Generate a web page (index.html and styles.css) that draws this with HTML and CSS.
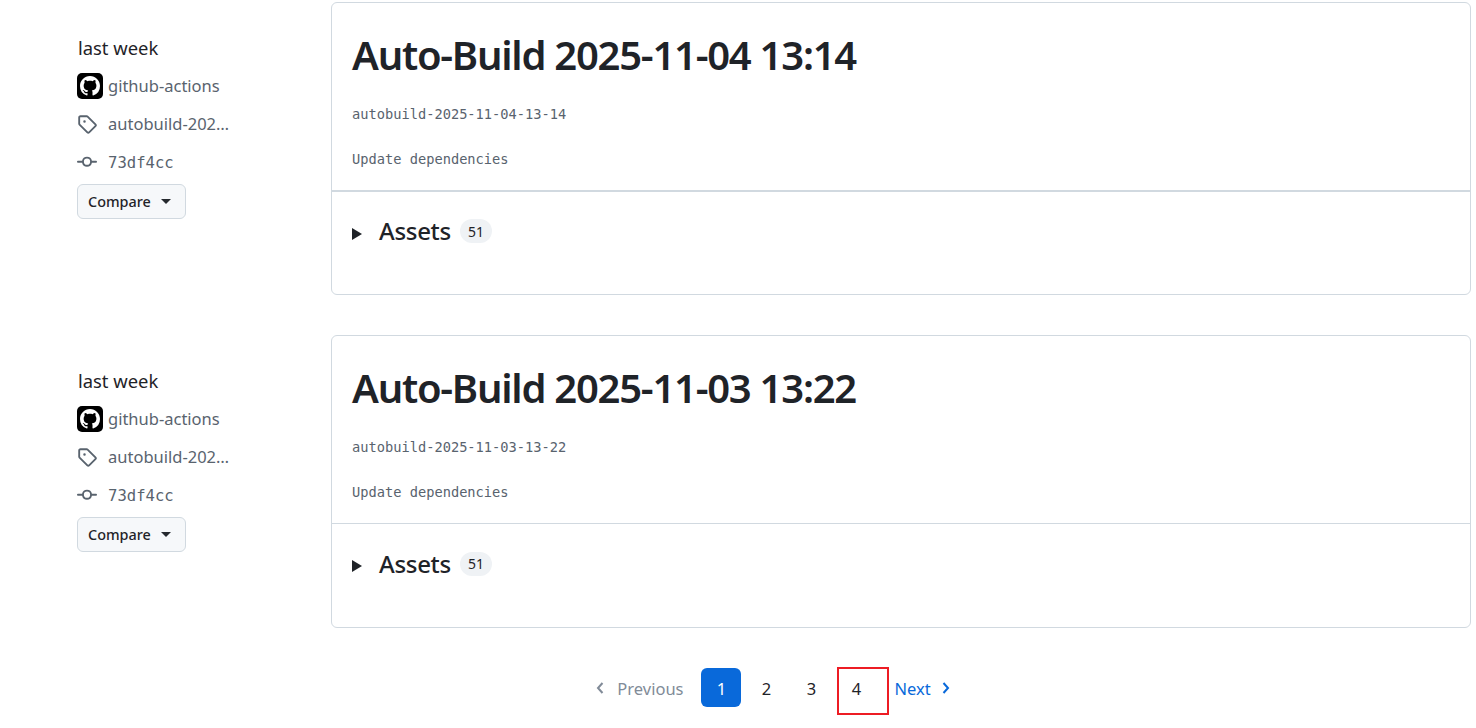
FILE: index.html
```html
<!DOCTYPE html>
<html lang="en">
<head>
<meta charset="utf-8">
<title>Releases</title>
<link rel="stylesheet" href="styles.css">
</head>
<body>
<svg class="defs" width="0" height="0" aria-hidden="true">
  <symbol id="mark" viewBox="0 0 16 16"><path fill="#fff" d="M8 0c4.42 0 8 3.58 8 8a8.013 8.013 0 0 1-5.45 7.59c-.4.08-.55-.17-.55-.38 0-.27.01-1.13.01-2.2 0-.75-.25-1.23-.54-1.48 1.78-.2 3.65-.88 3.65-3.95 0-.88-.31-1.59-.82-2.15.08-.2.36-1.02-.08-2.12 0 0-.67-.22-2.2.82-.64-.18-1.32-.27-2-.27-.68 0-1.36.09-2 .27-1.53-1.03-2.2-.82-2.2-.82-.44 1.1-.16 1.92-.08 2.12-.51.56-.82 1.28-.82 2.15 0 3.06 1.86 3.75 3.64 3.95-.23.2-.44.55-.51 1.07-.46.21-1.61.55-2.33-.66-.15-.24-.6-.83-1.23-.82-.67.01-.27.38.01.53.34.19.73.9.82 1.13.16.45.68 1.31 2.69.94 0 .67.01 1.3.01 1.49 0 .21-.15.45-.55.38A7.995 7.995 0 0 1 0 8c0-4.42 3.58-8 8-8Z"/></symbol>
  <symbol id="tag" viewBox="0 0 16 16"><path fill="currentColor" d="M1 7.775V2.75C1 1.784 1.784 1 2.75 1h5.025c.464 0 .91.184 1.238.513l6.25 6.25a1.75 1.75 0 0 1 0 2.474l-5.026 5.026a1.75 1.75 0 0 1-2.474 0l-6.25-6.25A1.752 1.752 0 0 1 1 7.775Zm1.5 0c0 .066.026.13.073.177l6.25 6.25a.25.25 0 0 0 .354 0l5.025-5.025a.25.25 0 0 0 0-.354l-6.25-6.25a.25.25 0 0 0-.177-.073H2.75a.25.25 0 0 0-.25.25ZM6 5a1 1 0 1 1 0 2 1 1 0 0 1 0-2Z"/></symbol>
  <symbol id="commit" viewBox="0 0 16 16"><path fill="currentColor" d="M11.93 8.5a4.002 4.002 0 0 1-7.86 0H.75a.75.75 0 0 1 0-1.5h3.32a4.002 4.002 0 0 1 7.86 0h3.32a.75.75 0 0 1 0 1.5Zm-1.43-.75a2.5 2.5 0 1 0-5 0 2.5 2.5 0 0 0 5 0Z"/></symbol>
</svg>
<main class="page">
  <section class="release">
    <div class="meta">
      <div class="when">last week</div>
      <div class="meta-row first"><span class="avatar"><svg width="20" height="20"><use href="#mark"/></svg></span><span class="lbl">github-actions</span></div>
      <div class="meta-row"><svg class="ico"><use href="#tag"/></svg><span class="lbl">autobuild-202…</span></div>
      <div class="meta-row"><svg class="ico"><use href="#commit"/></svg><span class="sha">73df4cc</span></div>
      <button class="compare">Compare<span class="caret"></span></button>
    </div>
    <article class="card">
      <div class="body">
        <h2 class="title">Auto-Build 2025-11-04 13:14</h2>
        <p class="mono tagname">autobuild-2025-11-04-13-14</p>
        <p class="mono desc">Update dependencies</p>
      </div>
      <div class="assets thick"><span class="tri"></span><span class="assets-label">Assets</span><span class="count">51</span></div>
    </article>
  </section>
  <section class="release">
    <div class="meta">
      <div class="when">last week</div>
      <div class="meta-row first"><span class="avatar"><svg width="20" height="20"><use href="#mark"/></svg></span><span class="lbl">github-actions</span></div>
      <div class="meta-row"><svg class="ico"><use href="#tag"/></svg><span class="lbl">autobuild-202…</span></div>
      <div class="meta-row"><svg class="ico"><use href="#commit"/></svg><span class="sha">73df4cc</span></div>
      <button class="compare">Compare<span class="caret"></span></button>
    </div>
    <article class="card">
      <div class="body">
        <h2 class="title">Auto-Build 2025-11-03 13:22</h2>
        <p class="mono tagname">autobuild-2025-11-03-13-22</p>
        <p class="mono desc">Update dependencies</p>
      </div>
      <div class="assets"><span class="tri"></span><span class="assets-label">Assets</span><span class="count">51</span></div>
    </article>
  </section>
  <nav class="pager">
    <span class="prev"><svg width="16" height="16" viewBox="0 0 16 16"><path class="chev" d="M9.5 3 5 8l4.5 5"/></svg>Previous</span>
    <span class="pg current">1</span>
    <span class="pg">2</span>
    <span class="pg">3</span>
    <span class="pg boxed">4</span>
    <span class="next">Next<svg width="16" height="16" viewBox="0 0 16 16"><path class="chev" d="M6.5 3 11 8l-4.5 5"/></svg></span>
  </nav>
</main>
</body>
</html>
```
FILE: styles.css
```css
*, *::after { box-sizing: border-box; }
html, body { margin: 0; background: #fff; }
body { height: 728px; overflow: hidden; font-family: "Noto Sans", "Open Sans", sans-serif; color: #1f2328; }
.defs { position: absolute; }
.page { padding: 2px 5px 0 77px; }
.release { display: flex; margin-bottom: 40px; }
.meta { width: 254px; flex: none; padding-top: 32px; }
.when { font-size: 18.4px; line-height: 28px; height: 32px; margin-bottom: 5px; padding-left: 1px; }
.meta-row { display: flex; align-items: center; height: 38px; gap: 5px; font-size: 16.5px; color: #59636e; white-space: nowrap; }
.meta-row.first { height: 30px; margin-bottom: 4px; }
.lbl { margin-bottom: 2px; }
.avatar { width: 26px; height: 26px; background: #000; border-radius: 5px; display: flex; align-items: center; justify-content: center; flex: none; }
.ico { width: 20px; height: 20px; margin-right: 6px; flex: none; color: #59636e; }
.sha { margin-top: 2px; font-family: "DejaVu Sans Mono", monospace; font-size: 15.6px; }
.compare { display: flex; align-items: center; height: 35px; width: 109px; padding: 0 0 0 10px; margin-top: 3px; font: 500 14.4px "Noto Sans", sans-serif; color: #1f2328; background: #f6f8fa; border: 1px solid #d1d9e0; border-radius: 6px; }
.caret { width: 0; height: 0; margin-left: 10px; border: 5px solid transparent; border-top-color: #25292e; border-bottom: 0; }
.card { flex: 1; height: 293px; border: 1px solid #d1d9e0; border-radius: 6px; }
.body { height: 187px; padding: 27px 20px 0; }
.title { margin: 0; font-size: 40px; line-height: 50px; font-weight: 600; letter-spacing: -1.25px; }
.mono { margin: 0; font-family: "DejaVu Sans Mono", monospace; font-size: 13.7px; line-height: 20px; color: #59636e; }
.tagname { margin-top: 24px; }
.desc { margin-top: 25px; }
.assets { display: flex; align-items: center; height: 80px; padding: 0 20px; border-top: 1px solid #d1d9e0; }
.assets.thick { border-top-width: 2px; }
.tri { width: 0; height: 0; margin-top: 5px; border-left: 10px solid #1f2328; border-top: 6px solid transparent; border-bottom: 6px solid transparent; }
.assets-label { margin-left: 17px; font-size: 24px; font-weight: 500; line-height: 30px; letter-spacing: -0.3px; }
.count { margin-left: 9px; display: flex; align-items: center; justify-content: center; width: 32px; height: 24px; border-radius: 12px; background: #eff2f5; font-size: 14px; font-weight: 400; }
.pager { display: flex; justify-content: center; align-items: center; height: 39px; padding-right: 2px; font-size: 16.5px; }
.prev { display: flex; align-items: center; gap: 8px; padding-top: 1px; color: #818b98; margin-right: 18px; }
.next { display: flex; align-items: center; gap: 6px; padding-top: 1px; color: #0969da; margin-left: 13px; }
.chev { fill: none; stroke: currentColor; stroke-width: 2; }
.pg { position: relative; width: 40px; height: 39px; margin-right: 5px; padding-top: 1px; display: flex; align-items: center; justify-content: center; border-radius: 6px; }
.pg.current { background: #0969da; color: #fff; }
.pg.boxed::after { content: ""; position: absolute; left: 1px; top: -1px; width: 52px; height: 48px; border: 2px solid #ed1c24; }
```
